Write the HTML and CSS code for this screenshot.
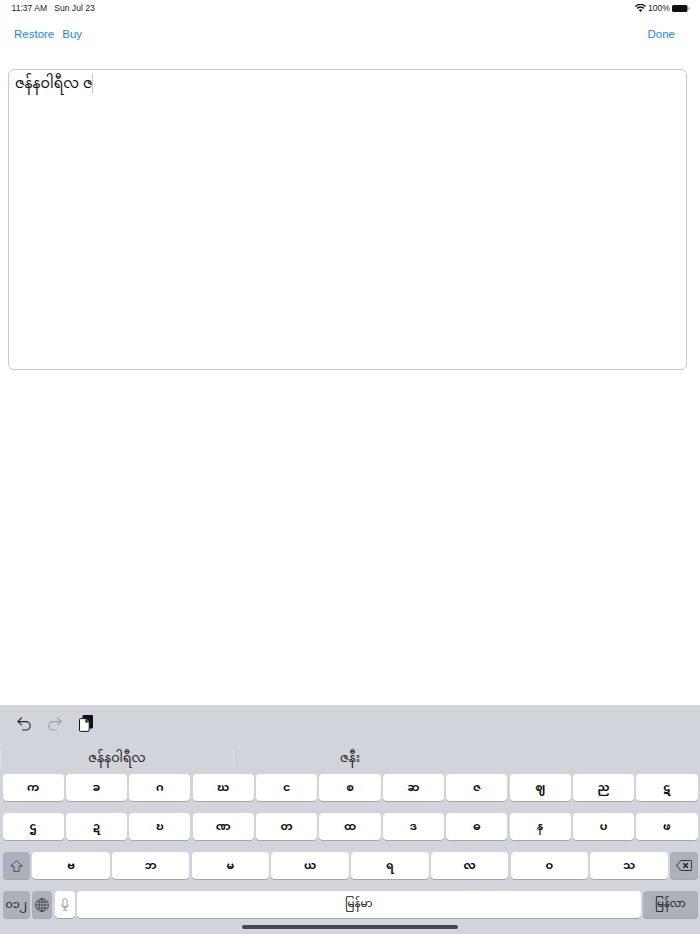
FILE: index.html
```html
<!DOCTYPE html>
<html lang="my">
<head>
<meta charset="utf-8">
<title>Keyboard</title>
<link rel="stylesheet" href="styles.css">
</head>
<body>
<div class="app">
  <div class="status">
    <div class="status-left"><span>11:37 AM</span><span>Sun Jul 23</span></div>
    <div class="status-right">
      <svg class="wifi" width="11" height="8" viewBox="0 0 11 8"><path d="M5.5 8 3.7 6a2.6 2.6 0 0 1 3.6 0zM2.7 5 1.6 3.8a5.6 5.6 0 0 1 7.8 0L8.3 5a4.1 4.1 0 0 0-5.6 0zM.8 3 0 2a7.8 7.8 0 0 1 11 0l-.8 1a6.6 6.6 0 0 0-9.4 0z" fill="#111"/></svg>
      <span>100%</span>
      <svg class="batt" width="18" height="7" viewBox="0 0 18 7"><rect x="0" y="0" width="15.5" height="7" rx="1.6" fill="#111"/><rect x="16.2" y="2.2" width="1.3" height="2.6" rx=".5" fill="#999"/></svg>
    </div>
  </div>
  <div class="nav">
    <div class="nav-group"><span>Restore</span><span>Buy</span></div>
    <span>Done</span>
  </div>
  <div class="editor"><span class="typed">ဇန်နဝါရီလ ဇ</span><span class="caret"></span></div>
  <div class="keyboard">
    <div class="tools">
      <svg class="tool-undo" width="14" height="14" viewBox="0 0 14 14" fill="none" stroke="#222" stroke-width="1.1" stroke-linecap="round" stroke-linejoin="round"><path d="M4.6.8 .8 4.6l3.8 3.2M1 4.6h8a4.2 4.2 0 0 1 0 8.4H5.6"/></svg>
      <svg class="tool-redo" width="14" height="14" viewBox="0 0 14 14" fill="none" stroke="#9a9da3" stroke-width="1.1" stroke-linecap="round" stroke-linejoin="round"><path d="M9.4.8l3.8 3.8-3.8 3.2M13 4.6H5a4.2 4.2 0 0 0 0 8.4h3.4"/></svg>
      <svg class="tool-clip" width="14" height="17" viewBox="0 0 14 17"><rect x="3.5" y="0" width="10.5" height="13.5" rx="1" fill="#111"/><path d="M1.6 3.6H7l3.2 3.2v8.4a1.2 1.2 0 0 1-1.2 1.2H1.6a1.1 1.1 0 0 1-1.1-1.2V4.8a1.1 1.1 0 0 1 1.1-1.2z" fill="#fff" stroke="#111" stroke-width="1"/><path d="M6.4 4v3.4h3.4z" fill="#111"/></svg>
    </div>
    <div class="candidates">
      <div class="cand">ဇန်နဝါရီလ</div>
      <div class="cand">ဇနီး</div>
    </div>
    <div class="rows">
      <div class="row">
        <div class="key">က</div><div class="key">ခ</div><div class="key">ဂ</div><div class="key">ဃ</div><div class="key">င</div><div class="key">စ</div><div class="key">ဆ</div><div class="key">ဇ</div><div class="key">ဈ</div><div class="key">ည</div><div class="key">ဋ</div>
      </div>
      <div class="row">
        <div class="key">ဌ</div><div class="key">ဍ</div><div class="key">ဎ</div><div class="key">ဏ</div><div class="key">တ</div><div class="key">ထ</div><div class="key">ဒ</div><div class="key">ဓ</div><div class="key">န</div><div class="key">ပ</div><div class="key">ဖ</div>
      </div>
      <div class="row">
        <div class="key fn small"><svg width="13" height="12" viewBox="0 0 13 12" fill="none" stroke="#444" stroke-width=".9" stroke-linejoin="round"><path d="M6.5.6.7 6.2h3.2v5.2h5.2V6.2h3.2z"/></svg></div>
        <div class="key">ဗ</div><div class="key">ဘ</div><div class="key">မ</div><div class="key">ယ</div><div class="key">ရ</div><div class="key">လ</div><div class="key">ဝ</div><div class="key">သ</div>
        <div class="key fn small"><svg width="16" height="11" viewBox="0 0 16 11" fill="none" stroke="#222" stroke-width=".9" stroke-linejoin="round"><path d="M5 .5h9.8a.8.8 0 0 1 .8.8v8.4a.8.8 0 0 1-.8.8H5L.6 5.5z"/><path d="m7.4 3.2 4.4 4.6M11.8 3.2 7.4 7.8" stroke-width="1.4"/></svg></div>
      </div>
      <div class="row">
        <div class="key fn small num">၀၁၂</div>
        <div class="key fn globe"><svg width="14" height="14" viewBox="0 0 15 15" fill="none" stroke="#333" stroke-width=".8"><circle cx="7.5" cy="7.5" r="6.8"/><ellipse cx="7.5" cy="7.5" rx="3.2" ry="6.8"/><path d="M7.5.7v13.6M.7 7.5h13.6M1.6 4.2h11.8M1.6 10.8h11.8"/></svg></div>
        <div class="key mic"><svg width="8" height="13" viewBox="0 0 10 16" fill="none" stroke="#8e9196" stroke-width="1.1"><rect x="2.4" y=".7" width="5.2" height="10" rx="2.6"/><path d="M.8 8a4.2 4.2 0 0 0 8.4 0M5 12.2v2.6M2.4 15.2h5.2"/></svg></div>
        <div class="key space">မြန်မာ</div>
        <div class="key fn lang">မြန်လာ</div>
      </div>
    </div>
  </div>
  <div class="home"></div>
</div>
</body>
</html>
```
FILE: styles.css
```css
* { box-sizing: border-box; }
html, body { margin: 0; padding: 0; background: #fff; }
body { font-family: "Liberation Sans", "Noto Sans Myanmar", "Noto Sans", sans-serif; }
.app { position: relative; width: 700px; height: 934px; overflow: hidden; display: flex; flex-direction: column; }
.status { height: 16px; padding: 0 10px 0 11.5px; display: flex; justify-content: space-between; align-items: center; font-size: 8.6px; color: #222; }
.status-left { display: flex; gap: 7px; }
.status-right { display: flex; align-items: center; gap: 2px; }
.nav { display: flex; justify-content: space-between; padding: 11px 25px 0 14px; height: 53px; font-size: 11.5px; color: #1a84f5; line-height: 14px; }
.nav-group { display: flex; gap: 8px; }
.editor { margin-left: 8px; width: 679px; height: 301px; border: 1px solid #c9c9c9; border-radius: 6px; padding: 2px 6px; font-size: 14px; line-height: 22px; color: #111; display: flex; align-items: flex-start; }
.typed { white-space: pre; }
.caret { width: 1px; height: 19px; background: #bcc6ef; margin: 2px 0 0 -1px; }
.keyboard { margin-top: auto; height: 229px; background: #d1d4da; display: flex; flex-direction: column; }
.tools { height: 37px; padding: 10px 0 0 17px; display: flex; gap: 17px; align-items: flex-start; }
.tool-undo, .tool-redo { margin-top: 2px; }
.candidates { height: 32px; display: flex; align-items: center; font-size: 12.5px; color: #222; }
.cand { width: 233px; text-align: center; border-left: 1px solid #dfe1e5; height: 18px; line-height: 18px; flex: none; }
.rows { display: flex; flex-direction: column; gap: 12px; padding: 0 2.5px; }
.row { display: flex; gap: 2.3px; height: 27px; }
.key { flex: 1 1 0; min-width: 0; background: #fff; border-radius: 4px; box-shadow: 0 1px 0 #a5a7ab; display: flex; align-items: center; justify-content: center; font-size: 11px; font-weight: 700; color: #111; }
.fn { background: #acb0b9; }
.small { flex: none; width: 27.5px; }
.num { font-weight: 400; font-size: 11px; }
.globe { flex: none; width: 20px; }
.mic { flex: none; width: 20px; }
.space { flex: none; width: 563.8px; font-weight: 400; font-size: 10.5px; }
.lang { flex: none; width: 54.7px; font-weight: 400; font-size: 10px; }
.home { position: absolute; left: 242px; top: 925px; width: 216px; height: 4px; border-radius: 2px; background: #44474c; }
```
